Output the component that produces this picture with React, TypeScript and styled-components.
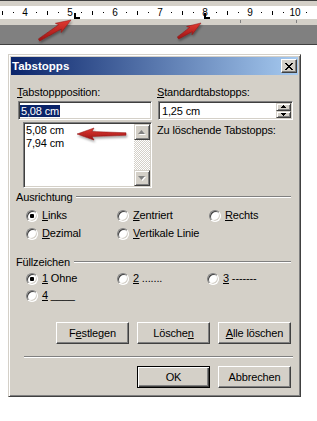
import React from "react";
import styled, { createGlobalStyle } from "styled-components";

const GlobalStyle = createGlobalStyle`
  html, body {
    margin: 0;
    padding: 0;
    background: #fff;
  }
  body {
    font-family: "Liberation Sans", Arial, sans-serif;
    font-size: 11px;
    color: #000;
  }
`;

const Page = styled.div`
  position: relative;
  width: 317px;
  height: 421px;
  overflow: hidden;
  background: #fff;
`;

/* ---------- ruler ---------- */

const RulerBar = styled.div`
  border-top: 1px solid #404040;
  border-bottom: 1px solid #404040;
  background: #808080;
`;

const RulerTop = styled.div`
  height: 5px;
  background: #d4d0c8;
`;

const RulerBand = styled.div`
  position: relative;
  height: 13px;
  background: #fff;
  overflow: hidden;
`;

const RulerScale = styled.div`
  display: grid;
  grid-template-columns: repeat(29, 11.25px);
  height: 100%;
  margin-left: -3.125px;
`;

const RulerCell = styled.div`
  display: flex;
  align-items: center;
  justify-content: center;
  font-size: 10px;
  line-height: 1;
  white-space: nowrap;
`;

const RulerDot = styled.span`
  width: 1px;
  height: 1px;
  background: #000;
`;

const RulerTick = styled.span`
  width: 1px;
  height: 4px;
  background: #000;
`;

const TabMark = styled.span<{ $left: number }>`
  position: absolute;
  left: ${(p) => p.$left}px;
  top: 7px;
  width: 4px;
  height: 4px;
  border-left: 2px solid #000;
  border-bottom: 2px solid #000;
`;

const RulerStrip = styled.div`
  position: relative;
  height: 6px;
  background: #d4d0c8;
`;

const DefaultTab = styled.span<{ $left: number }>`
  position: absolute;
  left: ${(p) => p.$left}px;
  top: 1px;
  width: 1px;
  height: 3px;
  background: #808080;
`;

const RulerShade = styled.div`
  height: 19px;
`;

/* ---------- dialog frame ---------- */

const Dialog = styled.div`
  margin: 9px 0 0 8px;
  width: 293px;
  height: 343px;
  box-sizing: border-box;
  background: #d4d0c8;
  border: 1px solid;
  border-color: #d4d0c8 #404040 #404040 #d4d0c8;
  box-shadow: inset 1px 1px #fff, inset -1px -1px #808080;
  padding: 2px;
  display: flex;
  flex-direction: column;
`;

const TitleBar = styled.div`
  height: 18px;
  display: flex;
  align-items: center;
  justify-content: space-between;
  padding: 0 1px 0 1px;
  background: linear-gradient(to right, #0a246a, #a6caf0);
`;

const TitleText = styled.span`
  color: #fff;
  font-weight: bold;
  font-size: 11.5px;
`;

const CloseButton = styled.div`
  width: 16px;
  height: 14px;
  box-sizing: border-box;
  background: #d4d0c8;
  border: 1px solid;
  border-color: #fff #404040 #404040 #fff;
  box-shadow: inset -1px -1px #808080;
  display: flex;
  align-items: center;
  justify-content: center;
`;

const Body = styled.div`
  flex: 1;
  padding: 11px 5px 0 6px;
  display: flex;
  flex-direction: column;
  letter-spacing: -0.15px;
`;

const TopGrid = styled.div`
  display: grid;
  grid-template-columns: 135px 1fr;
  column-gap: 5px;
`;

const Column = styled.div`
  display: flex;
  flex-direction: column;
  align-items: flex-start;
`;

const Label = styled.div<{ $top?: number }>`
  line-height: 13px;
  height: 13px;
  margin-top: ${(p) => p.$top ?? 0}px;
  white-space: nowrap;
`;

const Sunken = styled.div<{ $width: number; $height: number; $left?: number; $top?: number }>`
  width: ${(p) => p.$width}px;
  height: ${(p) => p.$height}px;
  margin: ${(p) => p.$top ?? 0}px 0 0 ${(p) => p.$left ?? 0}px;
  box-sizing: border-box;
  background: #fff;
  border: 1px solid;
  border-color: #808080 #fff #fff #808080;
  box-shadow: inset 1px 1px #404040, inset -1px -1px #d4d0c8;
  padding: 1px;
  display: flex;
`;

const FieldText = styled.span<{ $selected?: boolean }>`
  align-self: center;
  line-height: 12px;
  padding: 0 1px;
  margin-left: ${(p) => (p.$selected ? 0 : 1)}px;
  color: ${(p) => (p.$selected ? "#fff" : "#000")};
  background: ${(p) => (p.$selected ? "#0a246a" : "transparent")};
  flex: ${(p) => (p.$selected ? "none" : 1)};
`;

const SpinColumn = styled.div`
  width: 15px;
  display: flex;
  flex-direction: column;
`;

const RaisedButton = styled.div<{ $height?: number }>`
  height: ${(p) => (p.$height ? `${p.$height}px` : "auto")};
  flex: ${(p) => (p.$height ? "none" : 1)};
  box-sizing: border-box;
  background: #d4d0c8;
  border: 1px solid;
  border-color: #d4d0c8 #404040 #404040 #d4d0c8;
  box-shadow: inset 1px 1px #fff, inset -1px -1px #808080;
  display: flex;
  align-items: center;
  justify-content: center;
`;

const ListItems = styled.div`
  flex: 1;
  padding-left: 1px;
`;

const ListItem = styled.div`
  line-height: 13px;
`;

const ScrollBar = styled.div`
  width: 16px;
  display: flex;
  flex-direction: column;
`;

const ScrollTrack = styled.div`
  flex: 1;
  background: repeating-conic-gradient(#d4d0c8 0 25%, #fff 0 50%) 0 0 / 2px 2px;
`;

/* ---------- groups ---------- */

const GroupHeader = styled.div<{ $top: number }>`
  display: flex;
  align-items: center;
  height: 13px;
  margin: ${(p) => p.$top}px 2px 0 -1px;
`;

const GroupLine = styled.div`
  flex: 1;
  margin-left: 4px;
  border-top: 1px solid #808080;
  border-bottom: 1px solid #fff;
`;

const RadioGrid = styled.div<{ $cols: string; $top: number; $gap: number }>`
  display: grid;
  grid-template-columns: ${(p) => p.$cols};
  row-gap: ${(p) => p.$gap}px;
  margin-top: ${(p) => p.$top}px;
  padding-left: 9px;
`;

const RadioItem = styled.label`
  display: flex;
  align-items: center;
  gap: 4px;
  height: 13px;
  line-height: 13px;
  white-space: nowrap;
`;

const RadioCircle = styled.span<{ $checked?: boolean }>`
  position: relative;
  width: 12px;
  height: 12px;
  box-sizing: border-box;
  border-radius: 50%;
  background: #fff;
  border: 1px solid;
  border-color: #808080 #fff #fff #808080;
  box-shadow: inset 1px 1px 0 #404040, inset -1px -1px 0 #d4d0c8;

  &::after {
    content: "";
    display: ${(p) => (p.$checked ? "block" : "none")};
    position: absolute;
    left: 3px;
    top: 3px;
    width: 4px;
    height: 4px;
    border-radius: 1px;
    background: #000;
  }
`;

/* ---------- buttons ---------- */

const ButtonRow = styled.div<{ $top: number }>`
  display: flex;
  justify-content: flex-end;
  gap: 8px;
  margin: ${(p) => p.$top}px 2px 0 0;
`;

const PushButton = styled.div<{ $default?: boolean }>`
  width: 73px;
  height: 22px;
  box-sizing: border-box;
  background: #d4d0c8;
  display: flex;
  align-items: center;
  justify-content: center;
  border: 1px solid;
  border-color: ${(p) => (p.$default ? "#000" : "#fff #404040 #404040 #fff")};
  box-shadow: ${(p) =>
    p.$default
      ? "inset 1px 1px #fff, inset -1px -1px #404040, inset -2px -2px #808080"
      : "inset -1px -1px #808080"};
`;

const Separator = styled.div`
  margin: 12px 0 0 7px;
  border-top: 1px solid #808080;
  border-bottom: 1px solid #fff;
`;

/* ---------- overlay ---------- */

const Overlay = styled.svg`
  position: absolute;
  left: 0;
  top: 0;
  pointer-events: none;
  overflow: visible;
`;

/* ---------- icons ---------- */

const X_PIXELS = [
  "11....11",
  ".11..11.",
  "..1111..",
  "...11...",
  "..1111..",
  ".11..11.",
  "11....11",
];

function CloseGlyph() {
  return (
    <svg width="8" height="7" viewBox="0 0 8 7" shapeRendering="crispEdges">
      {X_PIXELS.flatMap((row, y) =>
        row.split("").map((c, x) => (c === "1" ? <rect key={`${x}-${y}`} x={x} y={y} width="1" height="1" fill="#000" /> : null))
      )}
    </svg>
  );
}

function SpinArrow({ down }: { down?: boolean }) {
  return (
    <svg width="5" height="3" viewBox="0 0 5 3" shapeRendering="crispEdges">
      <polygon points={down ? "0,0 5,0 2.5,3" : "2.5,0 5,3 0,3"} fill="#000" />
    </svg>
  );
}

function ScrollArrow({ down }: { down?: boolean }) {
  const pts = down ? "0,0 7,0 3.5,4" : "3.5,0 7,4 0,4";
  return (
    <svg width="8" height="5" viewBox="0 0 8 5">
      <polygon points={pts} fill="#fff" transform="translate(1,1)" />
      <polygon points={pts} fill="#808080" />
    </svg>
  );
}

function arrowPoints(
  tail: [number, number],
  tip: [number, number],
  headLen: number,
  headW: number,
  neckW: number,
  tailW: number
) {
  const dx = tip[0] - tail[0];
  const dy = tip[1] - tail[1];
  const len = Math.hypot(dx, dy);
  const ux = dx / len;
  const uy = dy / len;
  const nx = -uy;
  const ny = ux;
  const bx = tip[0] - ux * headLen;
  const by = tip[1] - uy * headLen;
  const p = (x: number, y: number, s: number) => `${(x + nx * s).toFixed(2)},${(y + ny * s).toFixed(2)}`;
  return [
    p(tail[0], tail[1], tailW / 2),
    p(bx, by, neckW / 2),
    p(bx - ux * 2, by - uy * 2, headW / 2),
    `${tip[0]},${tip[1]}`,
    p(bx - ux * 2, by - uy * 2, -headW / 2),
    p(bx, by, -neckW / 2),
    p(tail[0], tail[1], -tailW / 2),
  ].join(" ");
}

const arrows = [
  arrowPoints([39, 40], [71, 20], 13, 11, 5, 2.5),
  arrowPoints([178, 38], [201, 23], 12, 10, 5, 2.5),
  arrowPoints([126, 134], [77, 134], 15, 12, 5, 2.5),
];

const rulerCells = Array.from({ length: 29 }, (_, i) => {
  if (i % 4 === 2) return String(4 + (i - 2) / 4);
  if (i % 4 === 0) return "bar";
  return "dot";
});

type RadioDef = { key: string; label: React.ReactNode; checked?: boolean };

const alignment: RadioDef[] = [
  { key: "links", label: <><u>L</u>inks</>, checked: true },
  { key: "zentriert", label: <><u>Z</u>entriert</> },
  { key: "rechts", label: <><u>R</u>echts</> },
  { key: "dezimal", label: <><u>D</u>ezimal</> },
  { key: "vertikal", label: <><u>V</u>ertikale Linie</> },
];

const fill: RadioDef[] = [
  { key: "1", label: <><u>1</u> Ohne</>, checked: true },
  { key: "2", label: <><u>2</u> .......</> },
  { key: "3", label: <><u>3</u> -------</> },
  { key: "4", label: <><u>4</u> ____</> },
];

function RadioGroup({ items, cols, top, gap }: { items: RadioDef[]; cols: string; top: number; gap: number }) {
  return (
    <RadioGrid $cols={cols} $top={top} $gap={gap}>
      {items.map((item) => (
        <RadioItem key={item.key}>
          <RadioCircle $checked={item.checked} />
          <span>{item.label}</span>
        </RadioItem>
      ))}
    </RadioGrid>
  );
}

export default function App() {
  return (
    <Page>
      <GlobalStyle />
      <RulerBar>
        <RulerTop />
        <RulerBand>
          <RulerScale>
            {rulerCells.map((c, i) => (
              <RulerCell key={i}>
                {c === "bar" ? <RulerTick /> : c === "dot" ? <RulerDot /> : c}
              </RulerCell>
            ))}
          </RulerScale>
          <TabMark $left={74} />
          <TabMark $left={204} />
        </RulerBand>
        <RulerStrip>
          <DefaultTab $left={240} />
          <DefaultTab $left={296} />
        </RulerStrip>
        <RulerShade />
      </RulerBar>

      <Dialog>
        <TitleBar>
          <TitleText>Tabstopps</TitleText>
          <CloseButton>
            <CloseGlyph />
          </CloseButton>
        </TitleBar>
        <Body>
          <TopGrid>
            <Column>
              <Label>
                <u>T</u>abstoppposition:
              </Label>
              <Sunken $width={134} $height={19} $left={1} $top={2}>
                <FieldText $selected>5,08 cm</FieldText>
              </Sunken>
              <Sunken $width={129} $height={66} $left={6} $top={2}>
                <ListItems>
                  <ListItem>5,08 cm</ListItem>
                  <ListItem>7,94 cm</ListItem>
                </ListItems>
                <ScrollBar>
                  <RaisedButton $height={16}>
                    <ScrollArrow />
                  </RaisedButton>
                  <ScrollTrack />
                  <RaisedButton $height={16}>
                    <ScrollArrow down />
                  </RaisedButton>
                </ScrollBar>
              </Sunken>
            </Column>
            <Column>
              <Label>
                <u>S</u>tandardtabstopps:
              </Label>
              <Sunken $width={135} $height={19} $left={1} $top={2}>
                <FieldText>1,25 cm</FieldText>
                <SpinColumn>
                  <RaisedButton>
                    <SpinArrow />
                  </RaisedButton>
                  <RaisedButton>
                    <SpinArrow down />
                  </RaisedButton>
                </SpinColumn>
              </Sunken>
              <Label $top={4}>Zu löschende Tabstopps:</Label>
            </Column>
          </TopGrid>

          <GroupHeader $top={2}>
            <span>Ausrichtung</span>
            <GroupLine />
          </GroupHeader>
          <RadioGroup items={alignment} cols="91px 92px 1fr" top={6} gap={5} />

          <GroupHeader $top={15}>
            <span>Füllzeichen</span>
            <GroupLine />
          </GroupHeader>
          <RadioGroup items={fill} cols="91px 90px 1fr" top={4} gap={4} />

          <ButtonRow $top={20}>
            <PushButton>
              F<u>e</u>stlegen
            </PushButton>
            <PushButton>
              Lösche<u>n</u>
            </PushButton>
            <PushButton>
              <u>A</u>lle löschen
            </PushButton>
          </ButtonRow>
          <Separator />
          <ButtonRow $top={8}>
            <PushButton $default>OK</PushButton>
            <PushButton>Abbrechen</PushButton>
          </ButtonRow>
        </Body>
      </Dialog>

      <Overlay width="317" height="421" viewBox="0 0 317 421">
        <defs>
          <linearGradient id="arrowFill" x1="0" y1="0" x2="0" y2="1">
            <stop offset="0" stopColor="#e23a32" />
            <stop offset="1" stopColor="#9c1414" />
          </linearGradient>
          <filter id="arrowShadow" x="-20%" y="-20%" width="140%" height="160%">
            <feDropShadow dx="1" dy="2" stdDeviation="1" floodColor="#000" floodOpacity="0.35" />
          </filter>
        </defs>
        {arrows.map((pts, i) => (
          <polygon key={i} points={pts} fill="url(#arrowFill)" stroke="#8a1010" strokeWidth="0.5" filter="url(#arrowShadow)" />
        ))}
      </Overlay>
    </Page>
  );
}
